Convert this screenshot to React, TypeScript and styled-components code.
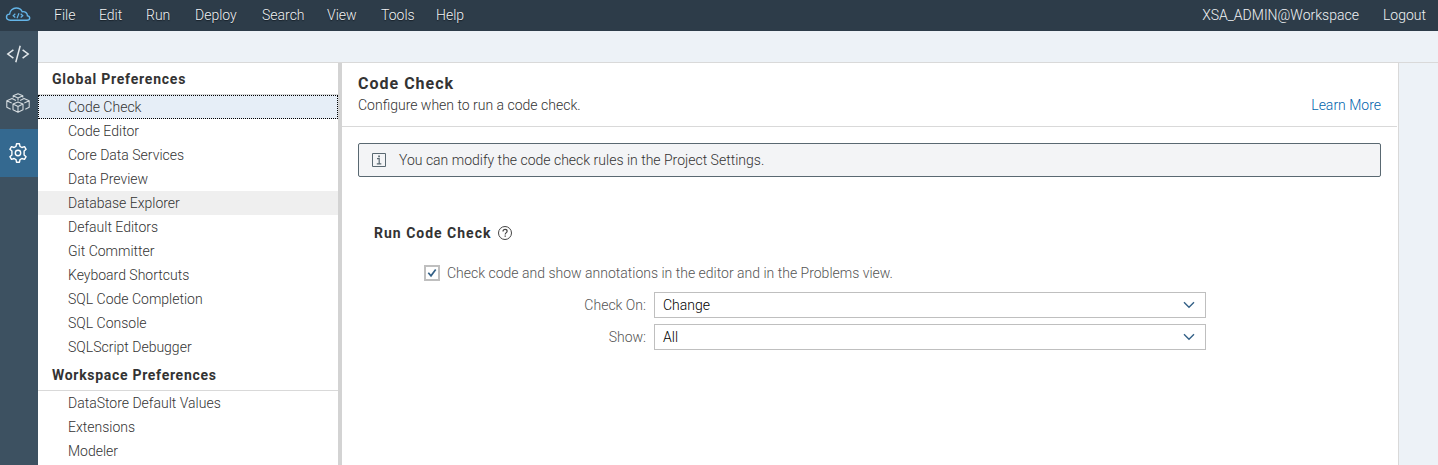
import React from "react";
import styled, { createGlobalStyle } from "styled-components";

const GlobalStyle = createGlobalStyle`
  * { box-sizing: border-box; }
  body { margin: 0; background: #fff; overflow: hidden; }
`;

const Page = styled.div`
  display: flex;
  flex-direction: column;
  width: 100%;
  height: 100vh;
  font: 300 14px/24px Roboto, "Liberation Sans", sans-serif;
  color: #333;
  white-space: nowrap;
`;

const Text = styled.span<{ $track?: number }>`
  letter-spacing: ${(p) => p.$track ?? 0}px;
`;

const TopBar = styled.header`
  display: flex;
  flex: 0 0 31px;
  align-items: center;
  padding-bottom: 1px;
  background: #2d3c49;
  color: #f0f2f4;
  text-shadow: 0 1px 1px #141c24;
`;

const Logo = styled.div`
  display: flex;
  width: 42px;
  padding-left: 5px;
`;

const Menu = styled.nav`
  display: flex;
  flex: 1;
`;

const MenuItem = styled.div<{ $width: number }>`
  width: ${(p) => p.$width}px;
  padding-left: 12px;
`;

const Account = styled.div`
  display: flex;
  gap: 24px;
  padding-right: 12px;
  text-shadow: none;
`;

const Body = styled.div`
  display: flex;
  flex: 1;
  min-height: 0;
`;

const Rail = styled.aside`
  display: flex;
  flex: 0 0 38px;
  flex-direction: column;
  background: #3d5161;
`;

const RailButton = styled.div<{ $active?: boolean; $height: number }>`
  display: flex;
  align-items: center;
  justify-content: center;
  height: ${(p) => p.$height}px;
  padding-right: 2px;
  background: ${(p) => (p.$active ? "#346990" : "transparent")};
`;

const Workspace = styled.div`
  display: flex;
  flex: 1;
  flex-direction: column;
  min-width: 0;
  background: #edf2f7;
`;

const TabStrip = styled.div`
  flex: 0 0 32px;
  border-bottom: 1px solid #d9d9d9;
`;

const Panes = styled.div`
  display: flex;
  flex: 1;
  min-height: 0;
`;

const PreferenceList = styled.div`
  width: 300px;
  overflow: hidden;
  background: #fff;
`;

const GroupTitle = styled.div`
  height: 32px;
  padding-left: 14px;
  border-bottom: 1px solid #d9d9d9;
  font-weight: 700;
  line-height: 32px;
  color: #333;
`;

const PreferenceRow = styled.div<{ $state?: "selected" | "hover" }>`
  height: 24px;
  padding-left: ${(p) => (p.$state === "selected" ? 29 : 30)}px;
  border: ${(p) => (p.$state === "selected" ? "1px dotted #000" : "0")};
  background: ${(p) =>
    p.$state === "selected" ? "#e6eef7" : p.$state === "hover" ? "#efefef" : "#fff"};
  line-height: ${(p) => (p.$state === "selected" ? 22 : 24)}px;
`;

const Splitter = styled.div`
  width: 4px;
  background: #d3d3d3;
`;

const Detail = styled.main`
  width: 1057px;
  padding-right: 1px;
  border-right: 1px solid #d9d9d9;
  background: #fff;
`;

const DetailHeader = styled.div`
  display: flex;
  align-items: flex-end;
  justify-content: space-between;
  height: 64px;
  padding: 0 16px 9px;
  border-bottom: 1px solid #d9d9d9;
`;

const DetailTitle = styled.h1`
  margin: 0;
  font-size: 16px;
  line-height: 18px;
  color: #333;
`;

const Link = styled.a`
  color: #0064ad;
`;

const Banner = styled.div`
  display: flex;
  align-items: center;
  gap: 13px;
  height: 34px;
  margin: 16px 16px 0;
  padding-left: 13px;
  border: 1px solid #596871;
  border-radius: 2px;
  background: #f3f4f6;
`;

const SectionTitle = styled.h2`
  display: flex;
  align-items: center;
  gap: 7px;
  height: 24px;
  margin: 44px 0 0 32px;
  font-size: 14px;
  color: #333;
`;

const CheckRow = styled.div`
  display: flex;
  align-items: center;
  gap: 7px;
  height: 24px;
  margin: 16px 0 7px 82px;
  color: #555;
`;

const CheckBox = styled.span`
  display: flex;
  align-items: center;
  justify-content: center;
  width: 16px;
  height: 16px;
  border: 2px solid #bfbfbf;
  background: #fff;
`;

const Field = styled.label`
  display: flex;
  align-items: center;
  height: 26px;
  margin-bottom: 6px;
  color: #555;
`;

const FieldLabel = styled.span`
  width: 304px;
  margin-right: 8px;
  text-align: right;
`;

const Select = styled.div`
  display: flex;
  align-items: center;
  justify-content: space-between;
  width: 552px;
  height: 26px;
  padding: 0 10px 0 8px;
  border: 1px solid #bfbfbf;
  color: #000;
`;

const CloudLogo = () => (
  <svg width="26" height="16" viewBox="0 0 26 16" fill="none" stroke="#64b5e8" strokeWidth="1.4">
    <path d="M5.2 13.2C2.8 13.2 1.5 11.8 1.5 10.1c0-1.8 1.5-3 3.1-3C4.8 3.6 7.8 1 11.2 1c2.8 0 5 1.5 6 3.7 3.2-.5 5.3 1.6 5.2 4 1.5.3 2.3 1.2 2.3 2.3 0 1.4-1.1 2.2-2.8 2.2z" />
    <path d="M10.3 6.8 8.2 8.7l2.1 1.8M15.7 6.8l2.1 1.9-2.1 1.8M14 6.2l-2 5.1" strokeWidth="1.2" />
  </svg>
);

const CodeIcon = () => (
  <svg width="24" height="18" viewBox="0 0 24 18" fill="none" stroke="#e3e8eb" strokeWidth="1.5">
    <path d="M7.4 4.8 1.8 9l5.6 4.2M16.6 4.8 22.2 9l-5.6 4.2M14.2.7 9.8 17.3" />
  </svg>
);

const CubesIcon = () => (
  <svg width="24" height="20" viewBox="0 0 24 20" fill="none" stroke="#d3dade" strokeWidth="1.1" strokeLinejoin="round">
    <path d="M7.200 4.500V2.800L12 .7l4.800 2.100v1.700M7.200 2.800 12 4.900l4.800-2.100M12 4.900v2.600" />
    <path d="M12 8.900l5 2.200v5.700l-5 2.400-5-2.400v-5.700zM7 11.100l5 2.400 5-2.400M12 13.500v5.500" />
    <path d="M9.900 7.400 6 5.400.8 7.700v6.500l3.900 2M.8 7.700 5.700 10M14.100 7.400l3.900-2 5.200 2.300v6.500l-3.900 2M23.200 7.700 18.300 10" />
  </svg>
);

const GearIcon = () => (
  <svg width="20" height="20" viewBox="0 0 20 20" fill="none" stroke="#fff" strokeWidth="1.4" strokeLinejoin="round">
    <path d="M8.5.8h3l.5 2.6 1.9 1.1 2.6-.9 1.6 2.7-2 1.8v3.8l2 1.8-1.6 2.7-2.6-.9-1.9 1.1-.5 2.6h-3L8 16.6l-1.9-1.1-2.6.9-1.6-2.7 2-1.8V8.1l-2-1.8 1.6-2.7 2.6.9L8 3.4z" />
    <circle cx="10" cy="10" r="2.7" />
  </svg>
);

const InfoIcon = () => (
  <svg width="14" height="14" viewBox="0 0 14 14" fill="none" stroke="#596871">
    <path d="M.5.5h13v13H.5z" />
    <path d="M5 5.7h2.2v5M4.8 10.8h4.5" strokeWidth="1.2" />
    <path d="M6.2 3.4h1.7" strokeWidth="1.6" />
  </svg>
);

const HelpIcon = () => (
  <svg width="14" height="14" viewBox="0 0 14 14" fill="none" stroke="#444">
    <circle cx="7" cy="7" r="6.5" />
    <path d="M5 5.4c0-1.3.9-2 2.1-2 1.1 0 2 .7 2 1.8C9.1 6.600 7.200 6.700 7.200 8.500" strokeWidth="1.2" />
    <path d="M7.200 9.500v1.300" strokeWidth="1.300" />
  </svg>
);

const CheckIcon = () => (
  <svg width="10" height="10" viewBox="0 0 10 10" fill="none" stroke="#346187" strokeWidth="1.7">
    <path d="M1.300 4.800 4 7.800 8.700 1.500" />
  </svg>
);

const ChevronIcon = () => (
  <svg width="12" height="8" viewBox="0 0 12 8" fill="none" stroke="#346187" strokeWidth="1.400">
    <path d="M1 1.300 6 6.300l5-5" />
  </svg>
);

type Entry = { label: string; track?: number };

const menus: (Entry & { width: number })[] = [
  { label: "File", width: 45 },
  { label: "Edit", width: 47 },
  { label: "Run", width: 49 },
  { label: "Deploy", width: 67 },
  { label: "Search", width: 65 },
  { label: "View", width: 54 },
  { label: "Tools", width: 55 },
  { label: "Help", width: 54 },
];

const globalPreferences: (Entry & { state?: "selected" | "hover" })[] = [
  { label: "Code Check", state: "selected" },
  { label: "Code Editor" },
  { label: "Core Data Services" },
  { label: "Data Preview" },
  { label: "Database Explorer", state: "hover" },
  { label: "Default Editors" },
  { label: "Git Committer" },
  { label: "Keyboard Shortcuts" },
  { label: "SQL Code Completion" },
  { label: "SQL Console" },
  { label: "SQLScript Debugger" },
];

const workspacePreferences: Entry[] = [
  { label: "DataStore Default Values" },
  { label: "Extensions" },
  { label: "Modeler" },
];

export default function App() {
  return (
    <Page>
      <GlobalStyle />
      <TopBar>
        <Logo><CloudLogo /></Logo>
        <Menu>
          {menus.map((m) => (
            <MenuItem key={m.label} $width={m.width}>
              <Text $track={m.track}>{m.label}</Text>
            </MenuItem>
          ))}
        </Menu>
        <Account>
          <Text>XSA_ADMIN@Workspace</Text>
          <Text>Logout</Text>
        </Account>
      </TopBar>
      <Body>
        <Rail>
          <RailButton $height={46}><CodeIcon /></RailButton>
          <RailButton $height={52}><CubesIcon /></RailButton>
          <RailButton $height={48} $active><GearIcon /></RailButton>
        </Rail>
        <Workspace>
          <TabStrip />
          <Panes>
            <PreferenceList>
              <GroupTitle><Text $track={0.78}>Global Preferences</Text></GroupTitle>
              {globalPreferences.map((p) => (
                <PreferenceRow key={p.label} $state={p.state}>
                  <Text $track={p.track}>{p.label}</Text>
                </PreferenceRow>
              ))}
              <GroupTitle><Text $track={0.7}>Workspace Preferences</Text></GroupTitle>
              {workspacePreferences.map((p) => (
                <PreferenceRow key={p.label}>
                  <Text $track={p.track}>{p.label}</Text>
                </PreferenceRow>
              ))}
            </PreferenceList>
            <Splitter />
            <Detail>
              <DetailHeader>
                <div>
                  <DetailTitle><Text $track={1}>Code Check</Text></DetailTitle>
                  <Text>Configure when to run a code check.</Text>
                </div>
                <Link><Text>Learn More</Text></Link>
              </DetailHeader>
              <Banner>
                <InfoIcon />
                <Text>You can modify the code check rules in the Project Settings.</Text>
              </Banner>
              <SectionTitle>
                <Text $track={1}>Run Code Check</Text>
                <HelpIcon />
              </SectionTitle>
              <CheckRow>
                <CheckBox><CheckIcon /></CheckBox>
                <Text>Check code and show annotations in the editor and in the Problems view.</Text>
              </CheckRow>
              <Field>
                <FieldLabel><Text>Check On:</Text></FieldLabel>
                <Select><Text>Change</Text><ChevronIcon /></Select>
              </Field>
              <Field>
                <FieldLabel><Text>Show:</Text></FieldLabel>
                <Select><Text>All</Text><ChevronIcon /></Select>
              </Field>
            </Detail>
          </Panes>
        </Workspace>
      </Body>
    </Page>
  );
}
